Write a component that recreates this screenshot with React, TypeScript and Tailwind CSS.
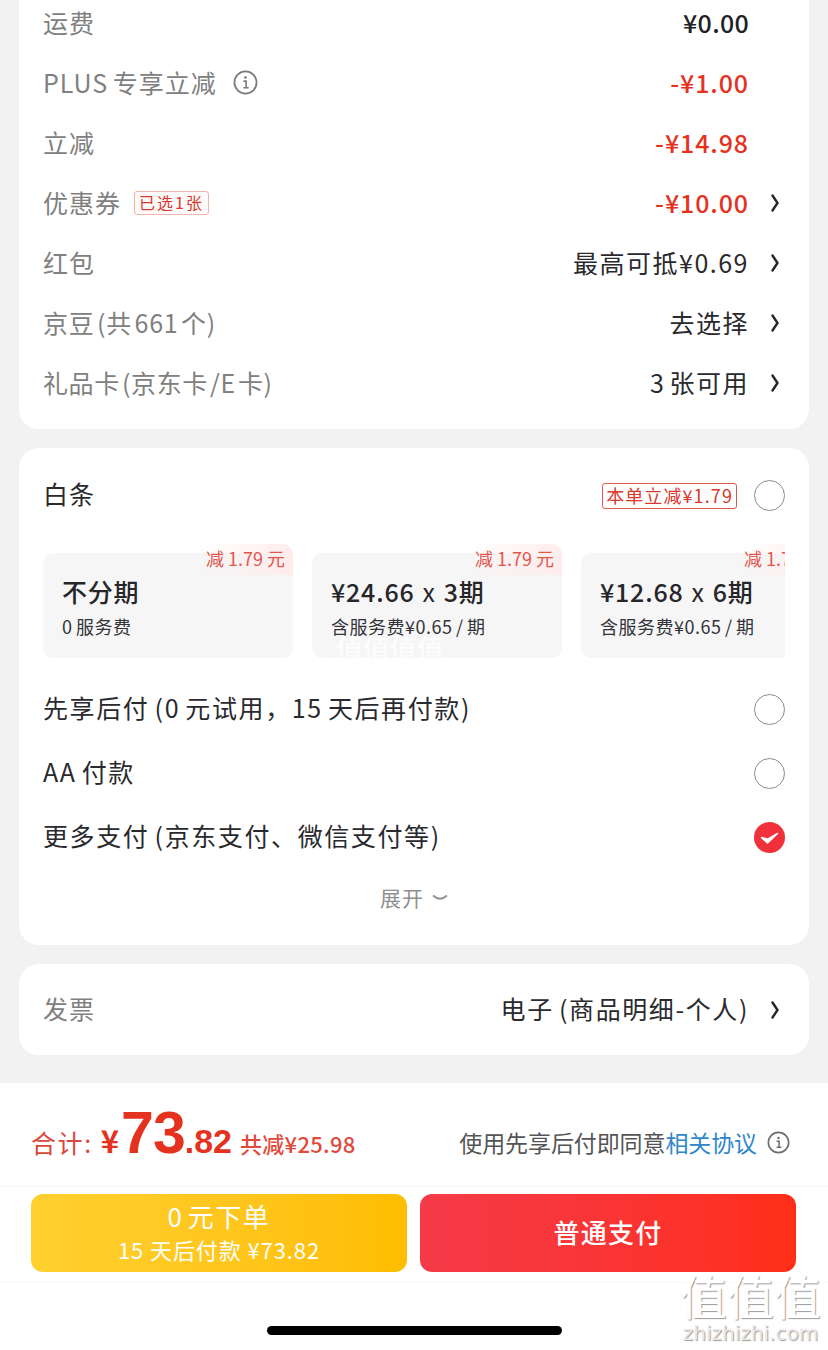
import React from "react";

const FONT = '"Noto Sans CJK SC", sans-serif';

const Chevron = () => (
  <svg width="12" height="20" viewBox="0 0 12 20" fill="none" className="ml-[21px] mr-[1px] shrink-0">
    <path d="M3.5 2.5 L8.5 10 L3.5 17.5" stroke="#26262a" strokeWidth="2.4" strokeLinejoin="round" strokeLinecap="round" />
  </svg>
);

const Info = ({ size = 25, color = "#7b7b7b" }: { size?: number; color?: string }) => (
  <svg width={size} height={size} viewBox="0 0 24 24" fill="none" className="shrink-0">
    <circle cx="12" cy="12" r="10.6" stroke={color} strokeWidth="1.7" />
    <circle cx="12" cy="7.2" r="1.3" fill={color} />
    <path d="M10 10.6 H12.6 V17 M10 17 H15" stroke={color} strokeWidth="1.6" />
  </svg>
);

const Radio = ({ checked = false }: { checked?: boolean }) =>
  checked ? (
    <svg width="31" height="31" viewBox="0 0 31 31" className="shrink-0">
      <circle cx="15.5" cy="15.5" r="15.5" fill="#f0303a" />
      <path d="M7.5 15.5 L13.5 21 L23.5 11.5 L13.8 17.2 Z" fill="#fff" stroke="#fff" strokeWidth="1.6" strokeLinejoin="round" />
    </svg>
  ) : (
    <div className="w-[31px] h-[31px] rounded-full border border-[#8c8c8c] shrink-0" />
  );

interface FeeRow {
  label: React.ReactNode;
  value: string;
  red?: boolean;
  arrow?: boolean;
  medium?: boolean;
}

const fees: FeeRow[] = [
  { label: "运费", value: "¥0.00", medium: true },
  {
    label: (
      <>
        <span className="[word-spacing:-2px]">PLUS 专享立减</span>
        <span className="ml-[16px]"><Info /></span>
      </>
    ),
    value: "-¥1.00",
    red: true,
  },
  { label: "立减", value: "-¥14.98", red: true },
  {
    label: (
      <>
        <span>优惠券</span>
        <span className="ml-[13px] h-[24px] px-[4px] rounded-[3px] border border-[#f0b5ad] bg-[#fffafa] text-[#d9382c] text-[16px] leading-[21px] tracking-[2px]">
          已选1张
        </span>
      </>
    ),
    value: "-¥10.00",
    red: true,
    arrow: true,
  },
  { label: "红包", value: "最高可抵¥0.69", arrow: true },
  { label: <span className="tracking-[0.8px]">京豆 (共 661 个)</span>, value: "去选择", arrow: true },
  { label: <span className="tracking-[0.6px]">礼品卡 (京东卡 /E 卡)</span>, value: "3 张可用", arrow: true },
];

const plans = [
  { title: "不分期", times: "", sub: "0 服务费" },
  { title: "¥24.66", times: "3期", sub: "含服务费¥0.65 / 期" },
  { title: "¥12.68", times: "6期", sub: "含服务费¥0.65 / 期" },
];

const options = [
  { label: "先享后付 (0 元试用，15 天后再付款)", checked: false },
  { label: "AA 付款", checked: false },
  { label: "更多支付 (京东支付、微信支付等)", checked: true },
];

export default function App() {
  return (
    <div
      className="relative w-[828px] h-[1350px] overflow-hidden bg-[#f2f2f2] flex flex-col"
      style={{ fontFamily: FONT }}
    >
      <div className="mx-[19px] -mt-[7px] pb-[16px] bg-white rounded-b-[20px]">
        {fees.map((row, i) => (
          <div key={i} className="flex items-center h-[60px] pl-[24px] pr-[27px]">
            <div className="flex items-center -mt-[1px] text-[25px] text-[#808080] tracking-[1px] [word-spacing:-4px]">{row.label}</div>
            <div className="ml-auto flex items-center">
              <span
                className={`text-[25px] -mr-[1px] -mt-[1px] ${
                  row.red
                    ? "text-[#e5321f] font-medium tracking-[0.9px]"
                    : row.medium
                      ? "text-[#222226] font-medium tracking-[0.3px]"
                      : "text-[#2a2a2e] tracking-[1.5px] [word-spacing:-3px]"
                }`}
              >
                {row.value}
              </span>
              {row.arrow ? <Chevron /> : <span className="w-[34px]" />}
            </div>
          </div>
        ))}
      </div>

      <div className="mx-[19px] mt-[19px] h-[497px] bg-white rounded-[20px] px-[24px] shrink-0">
        <div className="flex items-center h-[95px]">
          <span className="text-[25px] text-[#2a2a2e] tracking-[1px] -mt-[3px]">白条</span>
          <span className="ml-auto h-[26px] px-[3px] border border-[#e0584c] rounded-[3px] text-[#d9382c] text-[18px] leading-[23px] tracking-[1.1px]">
            本单立减¥1.79
          </span>
          <span className="ml-[17px]"><Radio /></span>
        </div>

        <div className="flex gap-[19px] overflow-hidden pt-[2px] -mt-[2px]">
          {plans.map((p) => (
            <div key={p.title} className="relative w-[250px] h-[105px] mt-[10px] shrink-0 rounded-[10px] bg-[#f6f6f7] pl-[19px] pt-[22px]">
              <div className="absolute right-0 -top-[9px] w-[92px] h-[31px] pb-[3px] rounded-tr-[10px] bg-gradient-to-l from-[#ffecec] to-[#f6f6f700] flex justify-end items-center pr-[8px] text-[18px] text-[#e2574c] whitespace-nowrap">
                减 1.79 元
              </div>
              <div className="text-[25px] leading-[33px] font-medium text-[#26262a] tracking-[0.8px]">
                {p.title}
                {p.times && (
                  <>
                    <span className="font-normal mx-[8px]">x</span>
                    {p.times}
                  </>
                )}
              </div>
              <div className="mt-[4px] text-[18px] leading-[28px] text-[#333338] tracking-[0.5px] [word-spacing:-1px]">{p.sub}</div>
            </div>
          ))}
        </div>

        <div className="mt-[19px]">
          {options.map((o) => (
            <div key={o.label} className="flex items-center h-[64px]">
              <span className="-mt-[2px] text-[25px] text-[#2a2a2e] tracking-[1.6px] [word-spacing:-2px]">{o.label}</span>
              <span className="ml-auto"><Radio checked={o.checked} /></span>
            </div>
          ))}
        </div>

        <div className="flex items-center justify-center gap-[8px] mt-[8px] h-[42px] text-[21px] text-[#8f8f8f] tracking-[1px]">
          展开
          <svg width="16" height="8" viewBox="0 0 16 8" fill="none">
            <path d="M1 1.5 Q8 8 15 1.5" stroke="#8f8f8f" strokeWidth="1.8" />
          </svg>
        </div>
      </div>

      <div className="mx-[19px] mt-[19px] h-[91px] bg-white rounded-[20px] pl-[24px] pr-[27px] flex items-center shrink-0">
        <span className="text-[25px] text-[#808080] tracking-[1px] -mt-[2px]">发票</span>
        <span className="ml-auto -mr-[1px] -mt-[2px] text-[25px] text-[#2a2a2e] tracking-[1.6px] [word-spacing:-2px]">电子 (商品明细-个人)</span>
        <Chevron />
      </div>

      <div className="mt-[28px] bg-white flex-1 flex flex-col">
        <div className="h-[104px] pl-[31px] pr-[38px] flex items-center border-b border-[#f5f5f5]">
          <div className="flex items-baseline text-[#e5321f] pt-[1px] whitespace-nowrap">
            <span className="text-[25px] text-[#d9483a] mr-[8px] tracking-[1.6px]">合计:</span>
            <span className="text-[31px] font-bold mr-[2px]">¥</span>
            <span className="text-[59px] leading-[60px] font-bold tracking-[-1px]" style={{ fontFamily: '"Liberation Sans", sans-serif' }}>73</span>
            <span className="text-[34px] font-bold" style={{ fontFamily: '"Liberation Sans", sans-serif' }}>.82</span>
            <span className="text-[22px] font-medium text-[#df4a3c] ml-[8px] tracking-[0.3px]">共减¥25.98</span>
          </div>
          <div className="ml-auto flex items-center text-[23px] tracking-[-0.1px] whitespace-nowrap pt-[15px]">
            <span className="text-[#555558]">使用先享后付即同意</span>
            <span className="text-[#2f86c9]">相关协议</span>
            <span className="ml-[10px]"><Info size={23} color="#6e6e6e" /></span>
          </div>
        </div>

        <div className="flex gap-[13px] pl-[31px] pt-[7px] pb-[10px] border-b border-[#f8f8f8]">
          <div className="w-[376px] h-[78px] pb-[5px] rounded-[12px] bg-gradient-to-r from-[#ffd02e] to-[#ffbd00] flex flex-col items-center justify-center text-white">
            <div className="text-[26px] leading-[36px] tracking-[1.5px] [word-spacing:-3px]">0 元下单</div>
            <div className="text-[22px] leading-[30px] tracking-[0.9px]">15 天后付款 ¥73.82</div>
          </div>
          <div className="w-[376px] h-[78px] pb-[3px] rounded-[12px] bg-gradient-to-r from-[#f53a48] to-[#ff2e17] flex items-center justify-center text-white text-[26px] font-medium tracking-[1.2px]">
            普通支付
          </div>
        </div>

        <div className="flex-1 flex items-end justify-center pb-[15px]">
          <div className="w-[295px] h-[9px] rounded-full bg-black" />
        </div>
      </div>

      <div className="absolute left-[336px] top-[635px] text-[27px] leading-[26px] text-white/80">值值值值</div>
      <div className="absolute left-[678px] top-[1269px] w-[145px] flex flex-col items-center" style={{ textShadow: "1px 1px 1px #9a9a9a" }}>
        <div className="text-[47px] leading-[52px] text-white whitespace-nowrap">值值值</div>
        <div className="text-[20px] leading-[24px] text-[#e9e9e9] whitespace-nowrap" style={{ fontFamily: '"DejaVu Sans", sans-serif' }}>zhizhizhi.com</div>
      </div>
    </div>
  );
}
